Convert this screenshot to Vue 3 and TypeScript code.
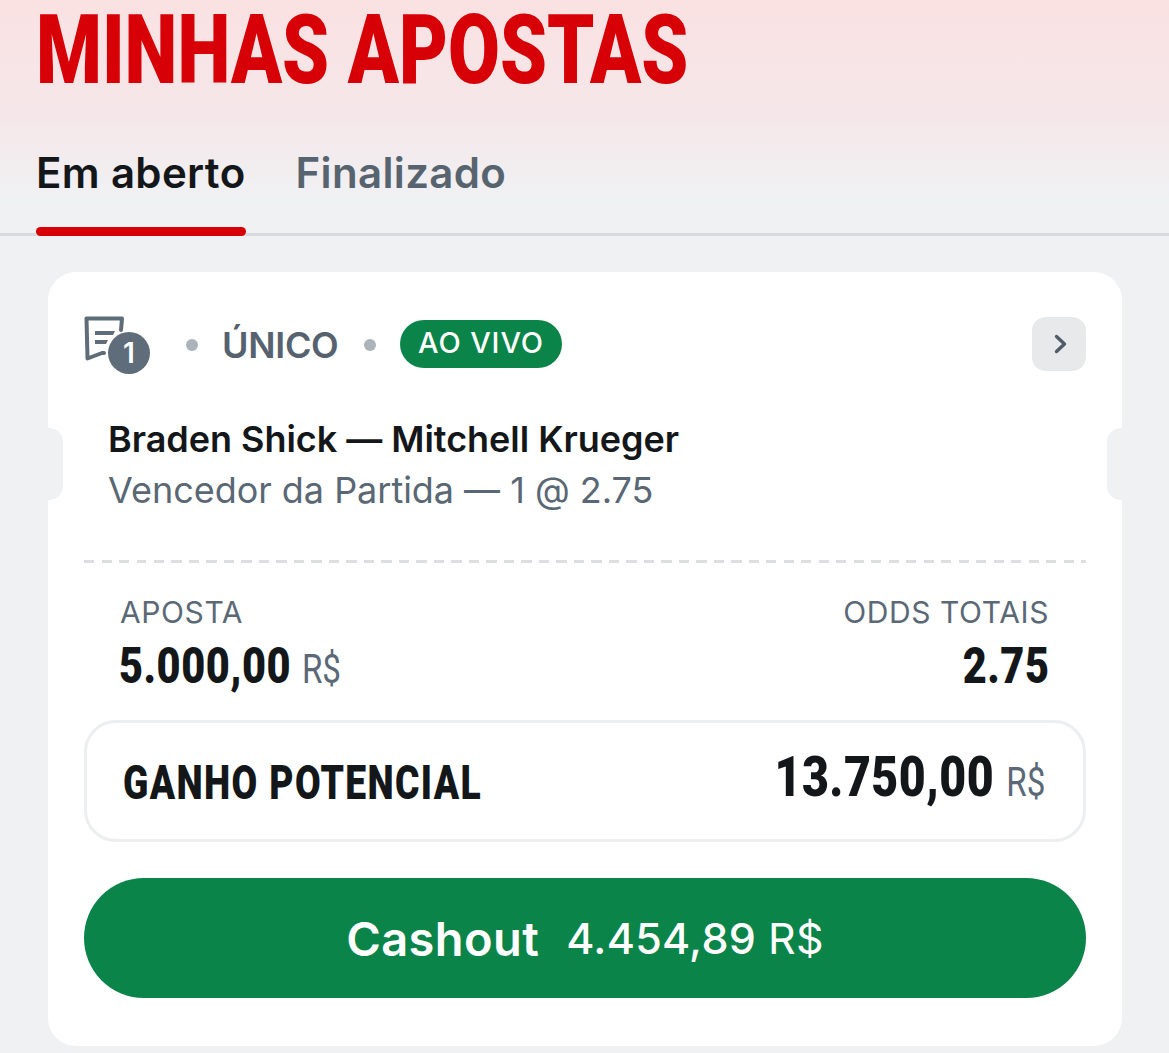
<template>
  <div class="page">
    <header class="page-header">
      <h1 class="title"><span class="squeeze title-text">MINHAS APOSTAS</span></h1>
      <nav class="tabs">
        <div class="tab active">Em aberto</div>
        <div class="tab">Finalizado</div>
      </nav>
    </header>

    <section class="card">
      <span class="notch left"></span>
      <span class="notch right"></span>

      <div class="card-head">
        <div class="slip-icon">
          <svg width="44" height="46" viewBox="0 0 44 46" fill="none">
            <path d="M2.5 2.5H38L37 14M2.5 2.5L3.5 42.5L18 37H20" stroke="#5f6c7a" stroke-width="4" stroke-linejoin="round" stroke-linecap="round" />
            <path d="M11 15H31L29 19H11ZM11 24H24L22 28H11Z" fill="#5f6c7a" />
          </svg>
          <span class="count">1</span>
        </div>
        <span class="dot"></span>
        <span class="kind">ÚNICO</span>
        <span class="dot"></span>
        <span class="live">AO VIVO</span>
        <button class="open-btn">
          <svg width="16" height="22" viewBox="0 0 16 22" fill="none">
            <path d="M5.5 3.5L13.5 11L5.5 18.5" stroke="#4f5c69" stroke-width="3.4" stroke-linecap="round" stroke-linejoin="round" />
          </svg>
        </button>
      </div>

      <div class="match">
        <div class="match-name">{{ bet.match }}</div>
        <div class="match-pick">{{ bet.pick }}</div>
      </div>

      <div class="divider"></div>

      <div class="stats">
        <div>
          <div class="stat-label">APOSTA</div>
          <div class="stat-value"><span class="squeeze">{{ bet.stake }} <span class="cur">R$</span></span></div>
        </div>
        <div class="stat-right">
          <div class="stat-label">ODDS TOTAIS</div>
          <div class="stat-value"><span class="squeeze from-right">{{ bet.odds }}</span></div>
        </div>
      </div>

      <div class="potential">
        <span class="potential-label"><span class="squeeze">GANHO POTENCIAL</span></span>
        <span class="potential-value"><span class="squeeze from-right">{{ bet.potential }} <span class="cur">R$</span></span></span>
      </div>

      <button class="cashout">
        <span class="cashout-label">Cashout</span>
        <span class="cashout-value">{{ bet.cashout }} <span class="cashout-cur">R$</span></span>
      </button>
    </section>
  </div>
</template>

<script setup lang="ts">
interface Bet {
  match: string
  pick: string
  stake: string
  odds: string
  potential: string
  cashout: string
}

const bet: Bet = {
  match: 'Braden Shick — Mitchell Krueger',
  pick: 'Vencedor da Partida — 1 @ 2.75',
  stake: '5.000,00',
  odds: '2.75',
  potential: '13.750,00',
  cashout: '4.454,89'
}
</script>

<style>
html,
body {
  margin: 0;
  background: #f0f1f3;
}
</style>

<style scoped>
.page {
  width: 1169px;
  height: 1053px;
  overflow: hidden;
  background: #f0f1f3;
  font-family: Inter, 'Liberation Sans', sans-serif;
}

.page-header {
  height: 236px;
  box-sizing: border-box;
  border-bottom: 3px solid #d8dadd;
  background: linear-gradient(180deg, #fae1e2 0%, #f5e7e9 50%, #f0f1f3 85%);
  padding: 0 36px;
}

/* no condensed face installed, so the display type is squeezed horizontally */
.squeeze {
  display: inline-block;
  white-space: nowrap;
  transform: scaleX(var(--sx, 0.8));
  transform-origin: left center;
}

.squeeze.from-right {
  transform-origin: right center;
}

.title {
  margin: 0;
  height: 131px;
  padding-top: 2px;
  box-sizing: border-box;
  font-family: Roboto, 'Liberation Sans', sans-serif;
  font-size: 97px;
  line-height: 96px;
  font-weight: 900;
  color: #d70006;
}

.title-text {
  --sx: 0.775;
}

.tabs {
  display: flex;
  gap: 50px;
}

.tab {
  position: relative;
  height: 102px;
  box-sizing: border-box;
  padding-top: 17px;
  font-size: 42px;
  line-height: 50px;
  font-weight: 600;
  letter-spacing: 0.35px;
  color: #57646f;
}

.tab.active {
  color: #14171a;
}

.tab.active::after {
  content: '';
  position: absolute;
  left: 0;
  right: 0;
  bottom: -3px;
  height: 9px;
  border-radius: 5px;
  background: #d70006;
}

.card {
  position: relative;
  margin: 36px 47px 0 48px;
  height: 774px;
  box-sizing: border-box;
  padding: 44px 36px 0;
  background: #fff;
  border-radius: 28px;
}

.notch {
  position: absolute;
  top: 156px;
  width: 15px;
  height: 72px;
  background: #f0f1f3;
}

.notch.left {
  left: 0;
  border-radius: 0 14px 14px 0;
}

.notch.right {
  right: 0;
  border-radius: 14px 0 0 14px;
}

.card-head {
  display: flex;
  align-items: center;
  height: 58px;
}

.slip-icon {
  position: relative;
  width: 66px;
  height: 58px;
}

.count {
  position: absolute;
  left: 24px;
  top: 16px;
  width: 42px;
  height: 42px;
  border-radius: 50%;
  background: #5f6c7a;
  color: #fff;
  font-size: 28px;
  font-weight: 600;
  line-height: 42px;
  text-align: center;
}

.dot {
  width: 12px;
  height: 12px;
  border-radius: 50%;
  background: #acb3bb;
}

.slip-icon + .dot {
  margin-left: 36px;
}

.kind {
  width: 118px;
  margin: 0 24px;
  font-size: 36px;
  font-weight: 600;
  letter-spacing: -0.3px;
  color: #56626f;
  white-space: nowrap;
}

.live {
  margin-left: 24px;
  height: 48px;
  margin-top: -2px;
  padding: 0 18px;
  border-radius: 24px;
  background: #0a8449;
  color: #fff;
  font-size: 29px;
  font-weight: 500;
  letter-spacing: 0.9px;
  line-height: 46px;
}

.open-btn {
  margin-left: auto;
  margin-top: -2px;
  width: 54px;
  height: 54px;
  border: 0;
  padding: 0;
  border-radius: 14px;
  background: #e8e9eb;
  display: flex;
  align-items: center;
  justify-content: center;
}

.match {
  padding: 42px 0 0 24px;
}

.match-name {
  font-size: 36px;
  line-height: 46px;
  font-weight: 600;
  letter-spacing: -0.03px;
  color: #14171a;
}

.match-pick {
  margin-top: 5px;
  font-size: 36px;
  line-height: 46px;
  letter-spacing: -0.03px;
  color: #5a6774;
}

.divider {
  margin-top: 47px;
  height: 3px;
  background: repeating-linear-gradient(90deg, #dcdee1 0 10px, transparent 10px 17.5px);
}

.stats {
  display: flex;
  justify-content: space-between;
  padding: 29px 37px 0 36px;
}

.stat-right {
  text-align: right;
}

.stat-label {
  font-size: 30px;
  line-height: 40px;
  letter-spacing: 0.6px;
  color: #5b6977;
}

.stat-value {
  margin-top: 6px;
  margin-left: -1px;
  font-family: Roboto, 'Liberation Sans', sans-serif;
  font-size: 50px;
  line-height: 56px;
  font-weight: 900;
  letter-spacing: 0.6px;
  color: #14171a;
  --sx: 0.83;
}

.cur {
  font-weight: 400;
  font-size: 40px;
  letter-spacing: 0;
  color: #5b6977;
}

.potential {
  margin-top: 22px;
  height: 122px;
  box-sizing: border-box;
  border: 3px solid #eceef0;
  border-radius: 32px;
  padding: 0 38px 0 36px;
  display: flex;
  align-items: center;
  justify-content: space-between;
  font-family: Roboto, 'Liberation Sans', sans-serif;
  font-weight: 900;
  color: #14171a;
}

.potential-label {
  margin-top: 3px;
  font-size: 48px;
  letter-spacing: 1.8px;
  --sx: 0.775;
}

.potential-value {
  font-size: 56px;
  margin-top: -8px;
  letter-spacing: 0.6px;
  --sx: 0.83;
}

.cashout {
  margin-top: 36px;
  width: 100%;
  height: 120px;
  border: 0;
  border-radius: 60px;
  background: #0a8449;
  color: #fff;
  font-family: inherit;
  display: flex;
  align-items: center;
  justify-content: center;
  gap: 27px;
}

.cashout-label {
  font-size: 47px;
  font-weight: 600;
  letter-spacing: 0.4px;
}

.cashout-value {
  font-size: 43px;
  font-weight: 500;
  letter-spacing: 0.3px;
}

.cashout-cur {
  font-weight: 400;
}
</style>
